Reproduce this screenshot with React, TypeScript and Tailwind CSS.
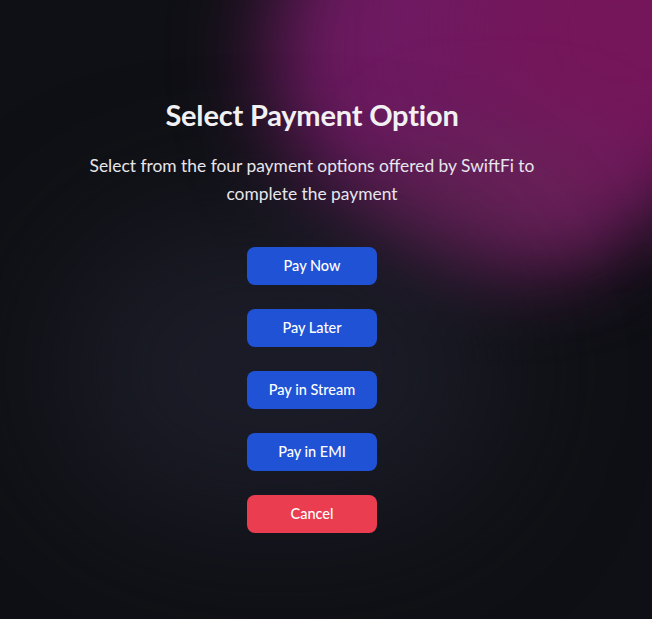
import React from "react";

const options = ["Pay Now", "Pay Later", "Pay in Stream", "Pay in EMI"];

export default function App() {
	return (
		<div className="relative h-[619px] w-full overflow-hidden bg-[#0f1015] font-['Lato','Noto_Sans',sans-serif] text-white">
			{/* Background glows */}
			<div className="absolute -top-[150px] left-[270px] w-[440px] h-[410px] rounded-full bg-[#6e1a62] blur-[45px]" />
			<div className="absolute -top-[120px] left-[470px] w-[300px] h-[300px] rounded-full bg-[#75165a] blur-[50px]" />
			<div className="absolute top-[120px] left-[380px] w-[240px] h-[140px] rounded-full bg-[#6a2458] opacity-70 blur-[40px]" />
			<div className="absolute top-[220px] left-[60px] w-[440px] h-[300px] rounded-full bg-[#1b1c27] blur-[70px]" />

			<div className="relative z-10 flex flex-col items-center pr-7 pt-[97px]">
				<h1 className="text-[29px] font-bold leading-[36px] tracking-[-0.2px] text-[#f1f1f4]">
					Select Payment Option
				</h1>
				<p className="mt-[19px] w-[490px] text-center text-[17.4px] leading-[28px] text-[#e6e6ec]">
					Select from the four payment options offered by SwiftFi to complete the payment
				</p>
				<div className="mt-[39px] flex flex-col gap-6">
					{options.map((label) => (
						<button
							key={label}
							className="w-[130px] h-[38px] rounded-lg bg-[#2052d6] text-[14.5px] font-medium text-white"
						>
							{label}
						</button>
					))}
					<button className="w-[130px] h-[38px] rounded-lg bg-[#ea3d4f] text-[14.5px] font-medium text-white">
						Cancel
					</button>
				</div>
			</div>
		</div>
	);
}
